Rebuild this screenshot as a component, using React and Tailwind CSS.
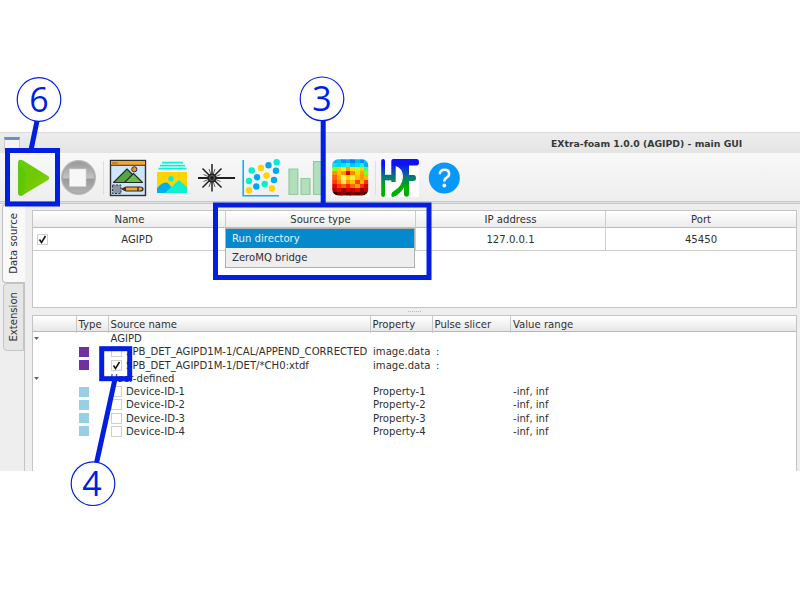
import React from "react";

const HEAT = [
  ["#00b4ff", "#00c8ff", "#0090ff", "#00a8ff", "#0080ff", "#00b8ff", "#0090ff", "#00c0ff"],
  ["#10e0f0", "#00d0ff", "#00e8ff", "#30f0d0", "#00c8ff", "#00e0ff", "#20f0e0", "#00b0ff"],
  ["#80ff20", "#ffc800", "#e8ff00", "#ffa000", "#ffe000", "#c0ff20", "#ffd000", "#60f060"],
  ["#ff9000", "#ffc000", "#ff9800", "#e00000", "#ff8800", "#ffd800", "#ffa000", "#80ff20"],
  ["#ff6000", "#ffb000", "#fff060", "#ffd800", "#ffe840", "#ffc000", "#ff9800", "#ffb800"],
  ["#ff3800", "#ff8800", "#ffe060", "#ff9000", "#ffc000", "#ff4000", "#ffb000", "#ff3000"],
  ["#e80000", "#ff3800", "#ff6000", "#ff2000", "#ff6800", "#ffa000", "#ff3000", "#e00000"],
  ["#b80000", "#e80000", "#a00000", "#d80000", "#c00000", "#f00000", "#980000", "#b00000"],
  ["#400000", "#700000", "#900000", "#500000", "#800000", "#600000", "#780000", "#400000"],
];

const DOTS = [
  [251.7, 170.5, "#00f0d0"], [261, 168, "#ffd400"], [268.5, 165.3, "#00a8f0"], [276.7, 162.3, "#00f0d0"],
  [276, 170.8, "#00a8f0"], [257, 177.2, "#00a8f0"], [266.5, 175.5, "#ffd400"], [249, 181, "#00f0d0"],
  [274, 180, "#00a8f0"], [264.7, 184, "#00f0d0"], [256.3, 186.5, "#00a8f0"], [272, 188.5, "#ffd400"],
  [249, 190.2, "#ffd400"],
];

function Toolbar() {
  const icon = "block h-12 shrink-0";
  return (
    <div className="flex h-12 shrink-0 bg-linear-to-b from-[#f8f8f8] to-[#eeeeee]">
      <svg className={`${icon} w-14`} viewBox="0 153 56 48">
        <defs>
          <linearGradient id="play" x1="0" x2="1" y2="1">
            <stop stopColor="#5fd010" /><stop offset=".5" stopColor="#72c800" /><stop offset="1" stopColor="#8bd51a" />
          </linearGradient>
        </defs>
        <path d="M18 163q0-5 5-2.500l25 15.500q2.500 2 0 4l-25 15q-4.500 2.500-5-2z" fill="url(#play)" />
        <path d="M18 192V165q12 4 5 30q-4.500 2.500-5-3z" fill="#4ec60c" opacity=".45" />
      </svg>
      <svg className={`${icon} w-12`} viewBox="56 153 48 48">
        <defs>
          <linearGradient id="stop" x2="0" y2="1">
            <stop stopColor="#989898" /><stop offset=".5" stopColor="#c2c2c2" /><stop offset=".56" stopColor="#9a9a9a" /><stop offset="1" stopColor="#b4b4b4" />
          </linearGradient>
        </defs>
        <circle cx="78.500" cy="177.500" r="17.500" fill="#b8b8b8" />
        <circle cx="78.500" cy="177.500" r="16" fill="url(#stop)" stroke="#a0a0a0" strokeWidth=".7" />
        <rect x="69.500" y="169" width="16.500" height="17.500" fill="#f7f7f7" stroke="#d5d5d5" strokeWidth=".6" />
        <path d="M103.500 161v34" stroke="#dedede" />
      </svg>
      <svg className={`${icon} w-[48px]`} viewBox="104 153 48 48">
        <rect x="110.500" y="160.500" width="35" height="35" fill="#cfe5fb" stroke="#303030" strokeWidth="1.400" />
        <rect x="111" y="161" width="34" height="4" fill="#f7a62a" />
        <path d="M111 165.300h34" stroke="#303030" />
        <path d="M112.500 163h5" stroke="#4b3510" strokeWidth="1.200" strokeDasharray="1.200 .8" />
        <circle cx="134.300" cy="169.300" r="2.600" fill="#f08d3c" stroke="#333" />
        <path d="M113.500 182.500L127 169l13.500 13.500z" fill="#55a544" stroke="#282828" strokeWidth="1.100" strokeLinejoin="round" />
        <path d="M124.500 182.500L133.500 173.500l9 9z" fill="#67bf4d" stroke="#282828" strokeWidth="1.100" strokeLinejoin="round" />
        <rect x="112.500" y="185" width="8.500" height="8.500" fill="#8994a5" stroke="#303030" strokeDasharray="2 1.500" />
        <path d="M122 189l4-2h14q3 0 3 2t-3 2h-14z" fill="#f7a62a" stroke="#282828" strokeWidth="1.200" />
        <path d="M122 189l4-2v4z" fill="#333" /><path d="M138 187v4" stroke="#333" strokeWidth="1.500" />
      </svg>
      <svg className={`${icon} w-[42px]`} viewBox="152 153 42 48">
        <path d="M162 162.700h21M160 165.700h25M158.500 168.700h28" stroke="#16ecd3" strokeWidth="1.700" />
        <rect x="157" y="172" width="30" height="21" fill="#ffd500" />
        <circle cx="171" cy="178.700" r="2.700" fill="#16ecd3" />
        <path d="M157 188q7-7 11-5l8 10h-19z" fill="#00aef0" />
        <path d="M165 193l14-13 8 7v6z" fill="#10f0cf" />
      </svg>
      <svg className={`${icon} w-[44px]`} viewBox="194 153 44 48">
        <g stroke="#202020" strokeWidth="1.500">
          <path d="M198 178h37" strokeWidth="1.900" /><path d="M212 164v27.500M202.500 168.500l19 19M221.500 168.500l-19 19" />
          <path d="M209 169l6 18M215 169l-6 18M203.500 174.500l17 7M220.500 174.500l-17 7" strokeWidth=".7" />
        </g>
        <circle cx="212" cy="178" r="4.500" fill="#222" /><circle cx="212" cy="178" r="2.500" fill="none" stroke="#777" strokeWidth=".8" />
      </svg>
      <svg className={`${icon} w-[46px]`} viewBox="238 153 46 48">
        <path d="M243.200 160v35.700H279" fill="none" stroke="#08b6ee" strokeWidth="1.600" />
        {DOTS.map(([x, y, c]) => <circle key={`${x}-${y}`} cx={x} cy={y} r="3.200" fill={c} />)}
      </svg>
      <svg className={`${icon} w-[44px]`} viewBox="284 153 44 48">
        <g fill="#b0dfba" stroke="#95c9a5" strokeWidth="1.200">
          <path d="M289 169h8.800v25.500H289zM301 178.500h9v16h-9zM313.500 161.500h8.500v33h-8.500z" />
        </g>
      </svg>
      <svg className={`${icon} w-[48px]`} viewBox="328 153 48 48">
        <defs><clipPath id="heat"><rect x="332.200" y="159.200" width="36" height="36.300" rx="6" /></clipPath></defs>
        <rect x="331" y="158.500" width="38.500" height="38.500" fill="#fcfcfc" />
        <g clipPath="url(#heat)" shapeRendering="crispEdges">
          {HEAT.map((row, r) => row.map((c, i) => (
            <rect key={`${r}-${i}`} x={332 + i * 4.6} y={159 + r * 4.1} width="5" height="4.600" fill={c} />
          )))}
        </g>
        <path d="M375.500 161v34" stroke="#dedede" />
      </svg>
      <svg className={`${icon} w-12`} viewBox="376 153 48 48">
        <defs>
          <linearGradient id="hdf" gradientUnits="userSpaceOnUse" x1="0" x2="0" y1="160" y2="196">
            <stop offset=".12" stopColor="#1010ff" /><stop offset=".48" stopColor="#087878" /><stop offset=".75" stopColor="#00b000" />
          </linearGradient>
        </defs>
        <rect x="381" y="159" width="38" height="38" fill="#fff" />
        <g fill="url(#hdf)">
          <rect x="381.200" y="159" width="3.800" height="38" rx="1.900" />
          <path d="M384 174.800h8v5.600h-8z" />
          <path d="M391.300 161q0-2 2-2H416.500q2.500 0 2.500 3.200t-2.500 3.200H409V175h4.500q2.500 0 2.500 3t-2.500 3H409V194.500q0 2.300-2.500 2.300T404 194.500V187.500Q399 195.500 393 197q-2 0-1.700-2.500t2.500-3.500Q402.500 186.500 403 176.500 402.500 168 395.700 166V182h-4.400z" />
        </g>
      </svg>
      <svg className={`${icon} w-11`} viewBox="424 153 44 48">
        <circle cx="444.300" cy="178" r="15.500" fill="#0898fb" />
        <path d="M439.800 174.200q.2-4.500 4.700-4.500 4.600 0 4.600 4 0 2.500-2.500 4-2.300 1.300-2.300 3.800" fill="none" stroke="#f5f5f5" strokeWidth="2.600" />
        <circle cx="444.300" cy="185.500" r="1.900" fill="#f5f5f5" />
      </svg>
    </div>
  );
}

function Check({ checked, className = "" }) {
  return (
    <span className={`flex size-[11px] shrink-0 items-center justify-center border border-[#cfcfcf] bg-white ${className}`}>
      {checked && (
        <svg className="size-[9px] shrink-0" viewBox="0 0 9 9">
          <path d="M1.500 4.500L3.500 7.500 7.500 1" fill="none" stroke="#151515" strokeWidth="1.500" />
        </svg>
      )}
    </span>
  );
}

function SourceTable() {
  return (
    <div className="h-[98px] shrink-0 border border-[#c4c4c4] bg-white">
      <div className="grid h-[17px] grid-cols-[193px_190px_190px_1fr] border-b border-[#bdbdbd] bg-linear-to-b from-white to-[#ececec] text-center leading-[17px]">
        <div className="border-r border-[#cccccc] pl-[1px]">Name</div>
        <div className="border-r border-[#cccccc]">Source type</div>
        <div className="border-r border-[#cccccc]">IP address</div>
        <div>Port</div>
      </div>
      <div className="grid h-[23px] grid-cols-[193px_190px_190px_1fr] border-b border-[#cccccc] text-center leading-[23px]">
        <div className="flex items-center border-r border-[#cccccc] pl-[4px]">
          <Check checked className="-mt-px" />
          <span className="ml-[1px] flex-1">AGIPD</span>
        </div>
        <div className="relative border-r border-[#cccccc]">
          <div className="absolute top-0 -left-px h-[40px] w-[190px] border border-[#b0b0b0] bg-[#eeeeee] text-left leading-[19px]">
            <div className="h-[19px] bg-[#0489cc] pl-[6px] text-[#e3f3fb]">Run directory</div>
            <div className="h-[19px] pl-[6px] leading-[20px]">ZeroMQ bridge</div>
          </div>
        </div>
        <div className="border-r border-[#cccccc]">127.0.0.1</div>
        <div>45450</div>
      </div>
    </div>
  );
}

const COLS = "grid-cols-[44px_32px_262px_62px_78px_1fr]";

const ROWS = [
  { group: "AGIPD" },
  { color: "purple", name: "SPB_DET_AGIPD1M-1/CAL/APPEND_CORRECTED", prop: "image.data", slicer: ":" },
  { color: "purple", name: "SPB_DET_AGIPD1M-1/DET/*CH0:xtdf", prop: "image.data", slicer: ":", checked: true },
  { group: "User-defined" },
  { name: "Device-ID-1", prop: "Property-1", range: "-inf, inf" },
  { name: "Device-ID-2", prop: "Property-2", range: "-inf, inf" },
  { name: "Device-ID-3", prop: "Property-3", range: "-inf, inf" },
  { name: "Device-ID-4", prop: "Property-4", range: "-inf, inf" },
];

function DeviceTree() {
  const head = "border-r border-[#c8c8c8] pl-[1.500px]";
  return (
    <div className="min-h-0 flex-1 border border-b-0 border-[#c4c4c4] bg-white">
      <div className={`grid h-4 ${COLS} border-b border-[#b8b8b8] bg-linear-to-b from-white to-[#e8e8e8] leading-[17px]`}>
        <div className={head} />
        <div className={head}>Type</div>
        <div className={head}>Source name</div>
        <div className={head}>Property</div>
        <div className={head}>Pulse slicer</div>
        <div className="pl-[2px]">Value range</div>
      </div>
      {ROWS.map((row) => (
        <div key={row.name || row.group} className={`grid h-[13.25px] ${COLS} items-center leading-[13px] whitespace-nowrap`}>
          <div className="pl-[1px]">
            {row.group && <svg className="h-[3px] w-[5px]" viewBox="0 0 5 3"><path d="M0 0h5L2.500 3z" fill="#666" /></svg>}
          </div>
          <div className="pl-[2px]">
            {row.name && <div className={`size-[10px] ${row.color ? "bg-[#7030a0]" : "bg-[#98cfe4]"}`} />}
          </div>
          {row.group ? (
            <div className="pl-[1.500px]">{row.group}</div>
          ) : (
            <div className="flex items-center gap-[4.500px] pl-[1.500px]"><Check checked={row.checked} />{row.name}</div>
          )}
          <div className="pl-[2px]">{row.prop}</div>
          <div className="pl-[3px]">{row.slicer}</div>
          <div className="pl-[2px]">{row.range}</div>
        </div>
      ))}
    </div>
  );
}

function Callouts() {
  return (
    <svg className="pointer-events-none absolute inset-0" width="800" height="600" viewBox="0 0 800 600">
      <g fill="none" stroke="#001fe0" strokeWidth="5">
        <path d="M37 121L31 150M323.200 120V205M115 379L96.500 463" />
        <rect x="7.500" y="150.500" width="50" height="53.500" />
        <rect x="215.500" y="205" width="213.500" height="72.500" />
        <rect x="101.700" y="348.700" width="28" height="30" />
      </g>
      <g fill="#fff" stroke="#001fe0" strokeWidth="1.200">
        <circle cx="39" cy="99.500" r="21.800" /><circle cx="322" cy="98.800" r="21.800" /><circle cx="93" cy="483.700" r="21.800" />
      </g>
      <g className="font-['Open_Sans',sans-serif] text-[34px]" fill="#001fe0" textAnchor="middle">
        <text x="39" y="111.500">6</text><text x="322" y="110.500">3</text><text x="92" y="496">4</text>
      </g>
    </svg>
  );
}

export default function App() {
  return (
    <div className="relative h-[600px] w-[800px] overflow-hidden bg-white pt-[132px] font-['DejaVu_Sans',sans-serif] text-[10.1px] text-[#303030]">
      <div className="flex h-[338.500px] flex-col overflow-hidden bg-[#eeeeee]">
        <div className="flex h-[21px] shrink-0 items-center border-t border-[#dadada] bg-linear-to-b from-[#ececec] to-[#e4e5e3]">
          <div className="ml-[4px] h-[13px] w-[16px] border border-[#c4cbd4] border-t-[3px] border-t-[#6d8fba] bg-[#f3f3f3]" />
          <div className="mt-px ml-[531px] text-[9.3px] font-bold whitespace-nowrap text-[#343a3c]">EXtra-foam 1.0.0 (AGIPD) - main GUI</div>
        </div>
        <Toolbar />
        <div className="h-[3px] shrink-0 border-y border-[#c6c6c6] bg-[#e2e2e2]" />
        <div className="flex min-h-0 flex-1">
          <div className="flex w-[25px] shrink-0 flex-col border-r border-[#c4c4c4] pl-[2px]">
            <div className="-mr-px flex h-[79px] items-center justify-center rounded-l-sm border border-r-0 border-[#c0c0c0] bg-[#f9f9f9]">
              <span className="rotate-180 whitespace-nowrap [writing-mode:vertical-rl]">Data source</span>
            </div>
            <div className="ml-[1px] flex h-[68px] items-center justify-center rounded-l-sm border border-[#c4c4c4] bg-[#e6e6e6]">
              <span className="rotate-180 whitespace-nowrap [writing-mode:vertical-rl]">Extension</span>
            </div>
          </div>
          <div className="flex min-w-0 flex-1 flex-col pt-[6px] pr-[3px] pl-[7px]">
            <SourceTable />
            <div className="flex h-[7px] shrink-0 items-center justify-center">
              <div className="w-[13px] border-t border-dotted border-[#bbbbbb]" />
            </div>
            <DeviceTree />
          </div>
        </div>
      </div>
      <Callouts />
    </div>
  );
}
